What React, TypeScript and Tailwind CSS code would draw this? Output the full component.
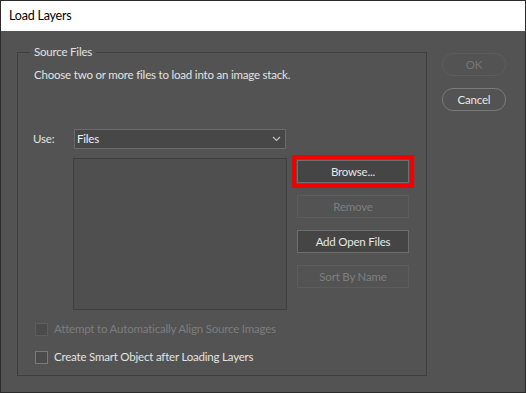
import type { ReactNode } from "react"

const FONT = "font-['Lato','Noto_Sans',sans-serif] tracking-[-0.2px]"

function DialogButton({
  children,
  disabled,
  highlight,
}: {
  children: ReactNode
  disabled?: boolean
  highlight?: boolean
}) {
  return (
    <button
      type="button"
      className={
        "h-[23px] w-[112px] border text-[11.5px] leading-none " +
        (disabled
          ? "border-[#5d5d5d] bg-[#535353] text-[#7f7f7f]"
          : "border-[#6e6e6e] bg-[#454545] text-[#e6e6e6]") +
        (highlight ? " outline-4 outline-offset-1 outline-[#f20000]" : "")
      }
    >
      {children}
    </button>
  )
}

function PillButton({ children, disabled }: { children: ReactNode; disabled?: boolean }) {
  return (
    <button
      type="button"
      className={
        "h-[23px] w-[64px] rounded-[11px] border text-[11.5px] leading-none " +
        (disabled ? "border-[#5c5c5c] text-[#767676]" : "border-[#7a7a7a] text-[#e8e8e8]")
      }
    >
      {children}
    </button>
  )
}

function Check({ label, disabled }: { label: string; disabled?: boolean }) {
  return (
    <label className="flex h-[16px] items-center">
      <span
        className={
          "ml-[1px] h-[13px] w-[13px] border bg-[#4b4b4b] " +
          (disabled ? "border-[#5e5e5e]" : "border-[#7a7a7a]")
        }
      />
      <span className={"ml-[6px] text-[11.5px] " + (disabled ? "text-[#7d7d7d]" : "text-[#e2e2e2]")}>
        {label}
      </span>
    </label>
  )
}

export default function App() {
  return (
    <div className={`flex h-[393px] w-[526px] flex-col border border-[#2b2b2b] bg-[#535353] ${FONT}`}>
      <div className="flex h-[30px] items-center bg-white pl-[8px] text-[12.5px] text-black">Load Layers</div>

      <div className="flex pl-[16px] pt-[13px]">
        <fieldset className="w-[410px] border border-[#3e3e3e] pb-[10px] pl-[16px]">
          <legend className="-ml-[4px] px-[4px] text-[11.5px] leading-[16px] text-[#e2e2e2]">Source Files</legend>
          <p className="mt-[7px] text-[11.5px] leading-[16px] text-[#e2e2e2]">
            Choose two or more files to load into an image stack.
          </p>

          <div className="mt-[46px] flex h-[20px] items-center">
            <span className="-ml-[1px] w-[41px] text-[11.5px] text-[#e2e2e2]">Use:</span>
            <div className="flex h-[20px] w-[212px] items-center justify-between border border-[#6b6b6b] bg-[#474747] pl-[2px] pr-[4px] text-[11.5px] text-[#f0f0f0]">
              <span>Files</span>
              <svg width="9" height="6" viewBox="0 0 9 6" fill="none" stroke="#bdbdbd" strokeWidth="1.2">
                <path d="M1 1l3.5 3.5L8 1" />
              </svg>
            </div>
          </div>

          <div className="mt-[9px] flex pl-[39px]">
            <div className="h-[152px] w-[214px] border border-[#3f3f3f] bg-[#4f4f4f]" />
            <div className="ml-[10px] mt-[2px] flex flex-col gap-[12px]">
              <DialogButton highlight>Browse...</DialogButton>
              <DialogButton disabled>Remove</DialogButton>
              <DialogButton>Add Open Files</DialogButton>
              <DialogButton disabled>Sort By Name</DialogButton>
            </div>
          </div>

          <div className="mt-[11px] flex flex-col gap-[12px]">
            <Check label="Attempt to Automatically Align Source Images" disabled />
            <Check label="Create Smart Object after Loading Layers" />
          </div>
        </fieldset>

        <div className="ml-[15px] mt-[9px] flex flex-col gap-[12px]">
          <PillButton disabled>OK</PillButton>
          <PillButton>Cancel</PillButton>
        </div>
      </div>
    </div>
  )
}
